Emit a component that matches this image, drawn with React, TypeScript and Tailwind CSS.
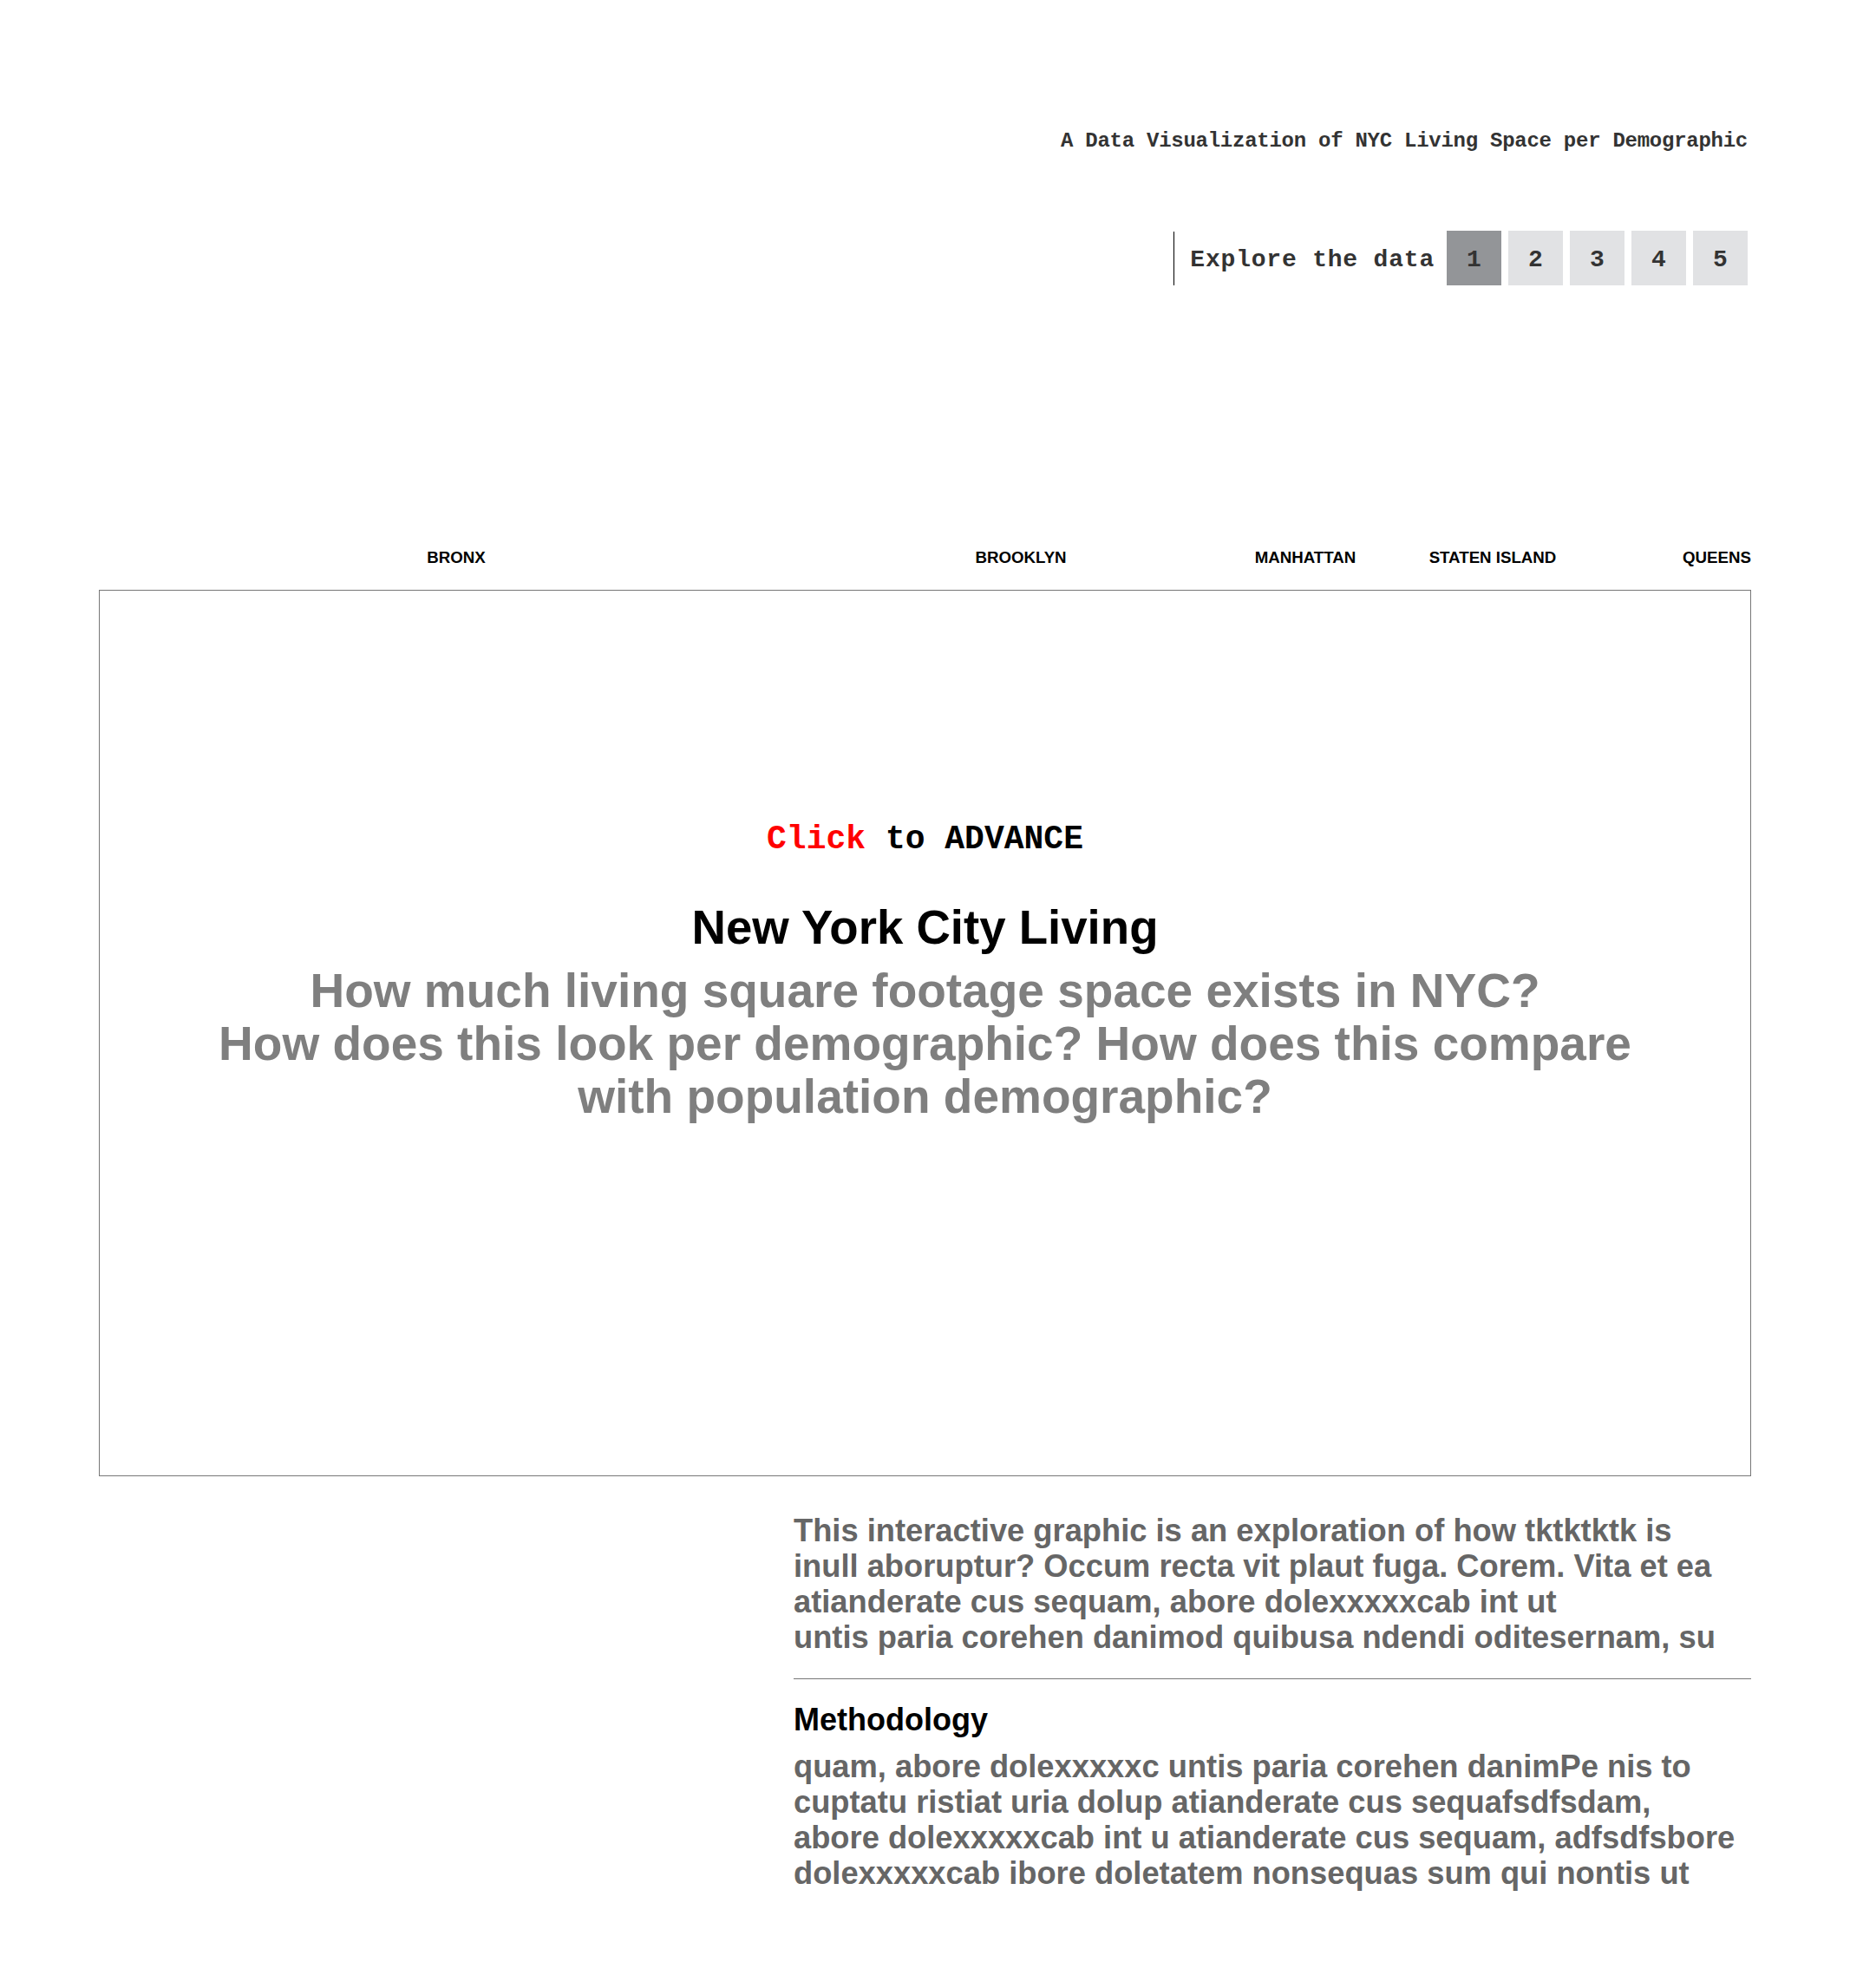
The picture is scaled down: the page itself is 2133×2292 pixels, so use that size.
const mono = "font-['Liberation_Mono',monospace]";
const sans = "font-['Liberation_Sans',Arial,sans-serif]";

const boroughs = ["BRONX", "BROOKLYN", "MANHATTAN", "STATEN ISLAND", "QUEENS"];

export default function App() {
  return (
    <main className={`min-h-screen bg-white px-[114px] ${sans}`}>
      <header className="flex flex-col items-end pt-[149px]">
        <p className={`${mono} text-[24px] leading-[28px] font-bold text-[#333] pr-[4px] tracking-[-0.26px]`}>
          A Data Visualization of NYC Living Space per Demographic
        </p>

        <nav className="mt-[89px] flex items-center pr-[4px]">
          <div className="w-px h-[62px] bg-black" />
          <span className={`${mono} ml-[18px] mr-[14px] pt-[5px] text-[28px] font-bold text-[#333] tracking-[0.8px]`}>
            Explore the data
          </span>
          <div className="flex gap-[8px]">
            {[1, 2, 3, 4, 5].map((n) => (
              <button
                key={n}
                className={`${mono} w-[63px] h-[63px] pt-[5px] flex items-center justify-center text-[28px] font-bold text-[#333] ${
                  n === 1 ? "bg-[#939598]" : "bg-[#e1e2e4]"
                }`}
              >
                {n}
              </button>
            ))}
          </div>
        </nav>
      </header>

      <section className="mt-[303px]">
        <div className="grid grid-cols-[824px_478px_178px_254px_1fr] text-[18.7px] leading-[22px] font-bold text-black">
          {boroughs.map((b, i) => (
            <span key={b} className={i === 4 ? "text-right" : "text-center"}>
              {b}
            </span>
          ))}
        </div>

        <div className="mt-[26px] h-[1022px] border border-[#777] flex flex-col items-center pt-[265px] text-center">
          <p className={`${mono} text-[38px] leading-[44px] font-bold text-black`}>
            <span className="text-[#ff0000]">Click</span> to ADVANCE
          </p>
          <h1 className="mt-[48px] text-[54.6px] leading-[64px] font-bold text-black">New York City Living</h1>
          <h2 className="mt-[10px] text-[55px] leading-[61px] font-bold text-[#7f7f7f]">
            How much living square footage space exists in NYC?
            <br />
            How does this look per demographic? How does this compare
            <br />
            with population demographic?
          </h2>
        </div>
      </section>

      <section className="flex justify-end pb-[120px]">
        <div className="w-[1104px]">
          <p className="mt-[42px] text-[36.3px] leading-[41px] font-bold text-[#666] whitespace-nowrap">
            This interactive graphic is an exploration of how tktktktk is
            <br />
            inull aboruptur? Occum recta vit plaut fuga. Corem. Vita et ea
            <br />
            atianderate cus sequam, abore dolexxxxxcab int ut
            <br />
            untis paria corehen danimod quibusa ndendi oditesernam, su
          </p>
          <div className="mt-[27px] h-px bg-[#777]" />
          <h3 className="mt-[27px] text-[36px] leading-[40px] font-bold text-black">Methodology</h3>
          <p className="mt-[13px] text-[36.3px] leading-[41px] font-bold text-[#666] whitespace-nowrap">
            quam, abore dolexxxxxc untis paria corehen danimPe nis to
            <br />
            cuptatu ristiat uria dolup atianderate cus sequafsdfsdam,
            <br />
            abore dolexxxxxcab int u atianderate cus sequam, adfsdfsbore
            <br />
            dolexxxxxcab ibore doletatem nonsequas sum qui nontis ut
          </p>
        </div>
      </section>
    </main>
  );
}
